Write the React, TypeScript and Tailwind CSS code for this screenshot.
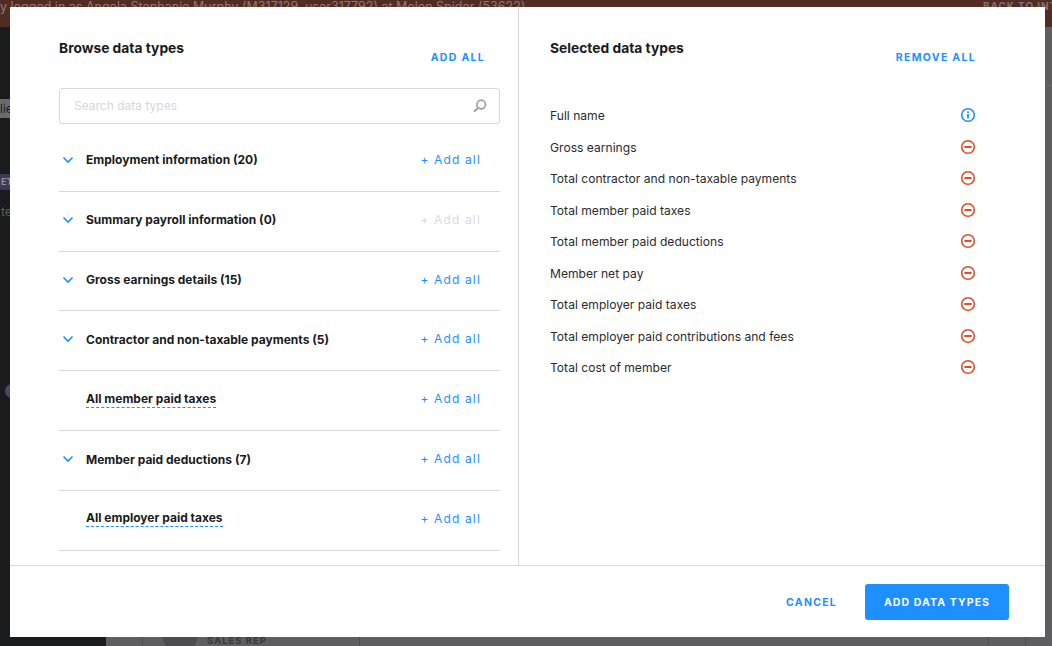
const font = "font-['Inter','Liberation_Sans',sans-serif]";

const groups = [
  { label: "Employment information (20)", chevron: true },
  { label: "Summary payroll information (0)", chevron: true, disabled: true },
  { label: "Gross earnings details (15)", chevron: true },
  { label: "Contractor and non-taxable payments (5)", chevron: true },
  { label: "All member paid taxes", tip: true },
  { label: "Member paid deductions (7)", chevron: true },
  { label: "All employer paid taxes", tip: true },
];

const selected = [
  "Full name",
  "Gross earnings",
  "Total contractor and non-taxable payments",
  "Total member paid taxes",
  "Total member paid deductions",
  "Member net pay",
  "Total employer paid taxes",
  "Total employer paid contributions and fees",
  "Total cost of member",
];

function Chevron() {
  return (
    <svg width="12" height="8" viewBox="0 0 12 8" fill="none" className="shrink-0">
      <path d="M1.5 1.5 6 6l4.5-4.5" stroke="#1e8fff" strokeWidth="1.6" />
    </svg>
  );
}

function InfoIcon() {
  return (
    <svg width="16" height="16" viewBox="0 0 16 16" fill="none" className="block">
      <circle cx="8" cy="8" r="6.3" stroke="#1e8fff" strokeWidth="1.6" />
      <rect x="7.1" y="7" width="1.8" height="4.4" fill="#1e8fff" />
      <rect x="7.1" y="4.3" width="1.8" height="1.7" fill="#1e8fff" />
    </svg>
  );
}

function RemoveIcon() {
  return (
    <svg width="16" height="16" viewBox="0 0 16 16" fill="none" className="block">
      <circle cx="8" cy="8" r="6.3" stroke="#dd4e28" strokeWidth="1.6" />
      <rect x="4.4" y="7" width="7.2" height="2" fill="#dd4e28" />
    </svg>
  );
}

function SearchIcon() {
  return (
    <svg width="14" height="14" viewBox="0 0 14 14" fill="none">
      <circle cx="8.2" cy="5.6" r="4.3" stroke="#9a9a9f" strokeWidth="1.6" />
      <path d="M5.2 8.6 1.2 12.6" stroke="#9a9a9f" strokeWidth="2" />
    </svg>
  );
}

function GroupRow({ group }: { group: (typeof groups)[number] }) {
  return (
    <div className="flex h-[59.83px] items-center border-b border-[#d6d6dd] pb-[3px]">
      <div className="flex w-[27px] shrink-0 justify-start pl-[3px]">{group.chevron && <Chevron />}</div>
      {group.tip ? (
        <span className="border-b border-dashed border-[#1e8fff] pb-[1px] text-[12px] leading-[15px] font-bold text-[#1a1b1d]">
          {group.label}
        </span>
      ) : (
        <span className="text-[12px] leading-[15px] font-bold text-[#1a1b1d]">{group.label}</span>
      )}
      <span
        className={`mr-[19px] ml-auto text-[12px] font-normal tracking-[1.15px] ${group.disabled ? "text-[#d9d9de]" : "text-[#1e8fff]"}`}
      >
        + Add all
      </span>
    </div>
  );
}

export default function App() {
  return (
    <div className={`relative flex h-[646px] w-[1052px] flex-col overflow-hidden bg-[#5e5e60] ${font}`}>
      {/* dimmed page behind the modal */}
      <div className="flex h-[27px] shrink-0 justify-between bg-[#522c22] text-[12.5px] leading-[13px] text-[#8d7a74]">
        <span className="whitespace-nowrap">y logged in as Angela Stephanie Murphy (M317129, user317792) at Melon Spider (53622)</span>
        <span className="w-[69px] shrink-0 overflow-hidden text-[10px] font-bold tracking-[0.9px] whitespace-nowrap text-[#7d7371]">BACK TO INTERNAL</span>
      </div>
      <div className="flex min-h-0 flex-1">
        <div className="flex w-[106px] shrink-0 flex-col bg-[#1a1b1d]">
          <div className="mt-[72px] h-[19px] w-[60px] overflow-hidden bg-[#6b6b6d] text-[12px] leading-[19px] text-[#1a1b1d]">lie</div>
          <div className="mt-[56px] h-[16px] w-[60px] bg-[#3f3a55] pl-[1px] text-[9px] leading-[16px] font-bold text-[#8f8f94]">ET</div>
          <div className="mt-[14px] pl-[1px] text-[12px] leading-[15px] text-[#5e5e60]">te</div>
          <div className="mt-[165px] ml-[5px] h-[14px] w-[14px] rounded-full bg-[#4b4668]" />
        </div>
        <div className="flex min-w-0 flex-1 flex-col justify-between">
          <div className="mt-[58px] h-px w-full bg-[#6b6b6d]" />
          <div className="flex h-[9px] overflow-hidden">
            <div className="ml-[36px] flex h-[9px] w-[218px] items-start border-x border-[#4d4d4f] pl-[19px]">
              <div className="mt-[-20px] h-[36px] w-[36px] shrink-0 rounded-full bg-[#4d4d4f]" />
              <span className="mt-[-1px] ml-[9px] text-[9.5px] leading-[9px] font-bold tracking-[1px] whitespace-nowrap text-[#3a3a3c]">SALES REP</span>
            </div>
            <div className="h-[9px] w-[629px] border-r border-[#4d4d4f]" />
            <div className="h-[9px] w-[37px] border-r border-[#4d4d4f]" />
          </div>
        </div>
      </div>

      {/* modal */}
      <div className="absolute top-[7px] left-[10px] flex h-[630px] w-[1035px] flex-col bg-white">
        <div className="flex min-h-0 flex-1 border-b border-[#d6d6dd]">
          <div className="flex w-[509px] shrink-0 flex-col border-r border-[#d6d6dd] pr-[18px] pl-[49px]">
            <div className="flex h-[81px] shrink-0 items-start justify-between pt-[32px] pr-[15px]">
              <h2 className="text-[13.8px] leading-[18px] font-bold text-[#1a1b1d]">Browse data types</h2>
              <button className="mt-[11px] text-[10.5px] leading-[16px] font-bold tracking-[1.3px] text-[#1e8fff]">ADD ALL</button>
            </div>
            <div className="flex h-[36px] shrink-0 items-center justify-between rounded-[3px] border border-[#d6d6dd] pr-[12px] pl-[14px]">
              <span className="text-[12px] text-[#d6d6dd]">Search data types</span>
              <SearchIcon />
            </div>
            <div className="mt-[8px]">
              {groups.map((g) => (
                <GroupRow key={g.label} group={g} />
              ))}
            </div>
          </div>
          <div className="flex min-w-0 flex-1 flex-col pr-[69px] pl-[31px]">
            <div className="flex h-[81px] shrink-0 items-start justify-between pt-[32px]">
              <h2 className="text-[13.8px] leading-[18px] font-bold text-[#1a1b1d]">Selected data types</h2>
              <button className="mt-[11px] text-[10.5px] leading-[16px] font-bold tracking-[1.3px] text-[#1e8fff]">REMOVE ALL</button>
            </div>
            <ul className="mt-[11.4px]">
              {selected.map((name, i) => (
                <li key={name} className="flex h-[31.5px] items-center justify-between text-[12.1px] text-[#2b2b2e]">
                  <span className="pt-[2px]">{name}</span>
                  <span className="block">{i === 0 ? <InfoIcon /> : <RemoveIcon />}</span>
                </li>
              ))}
            </ul>
          </div>
        </div>
        <div className="flex h-[71px] shrink-0 items-center justify-end gap-[28px] pr-[36px]">
          <button className="pt-[3px] text-[10.5px] font-bold tracking-[1.25px] text-[#1e8fff]">CANCEL</button>
          <button className="h-[36px] w-[144px] rounded-[3px] bg-[#1e8fff] pt-[3px] text-[10.5px] font-bold tracking-[1.1px] text-white">
            ADD DATA TYPES
          </button>
        </div>
      </div>
    </div>
  );
}
